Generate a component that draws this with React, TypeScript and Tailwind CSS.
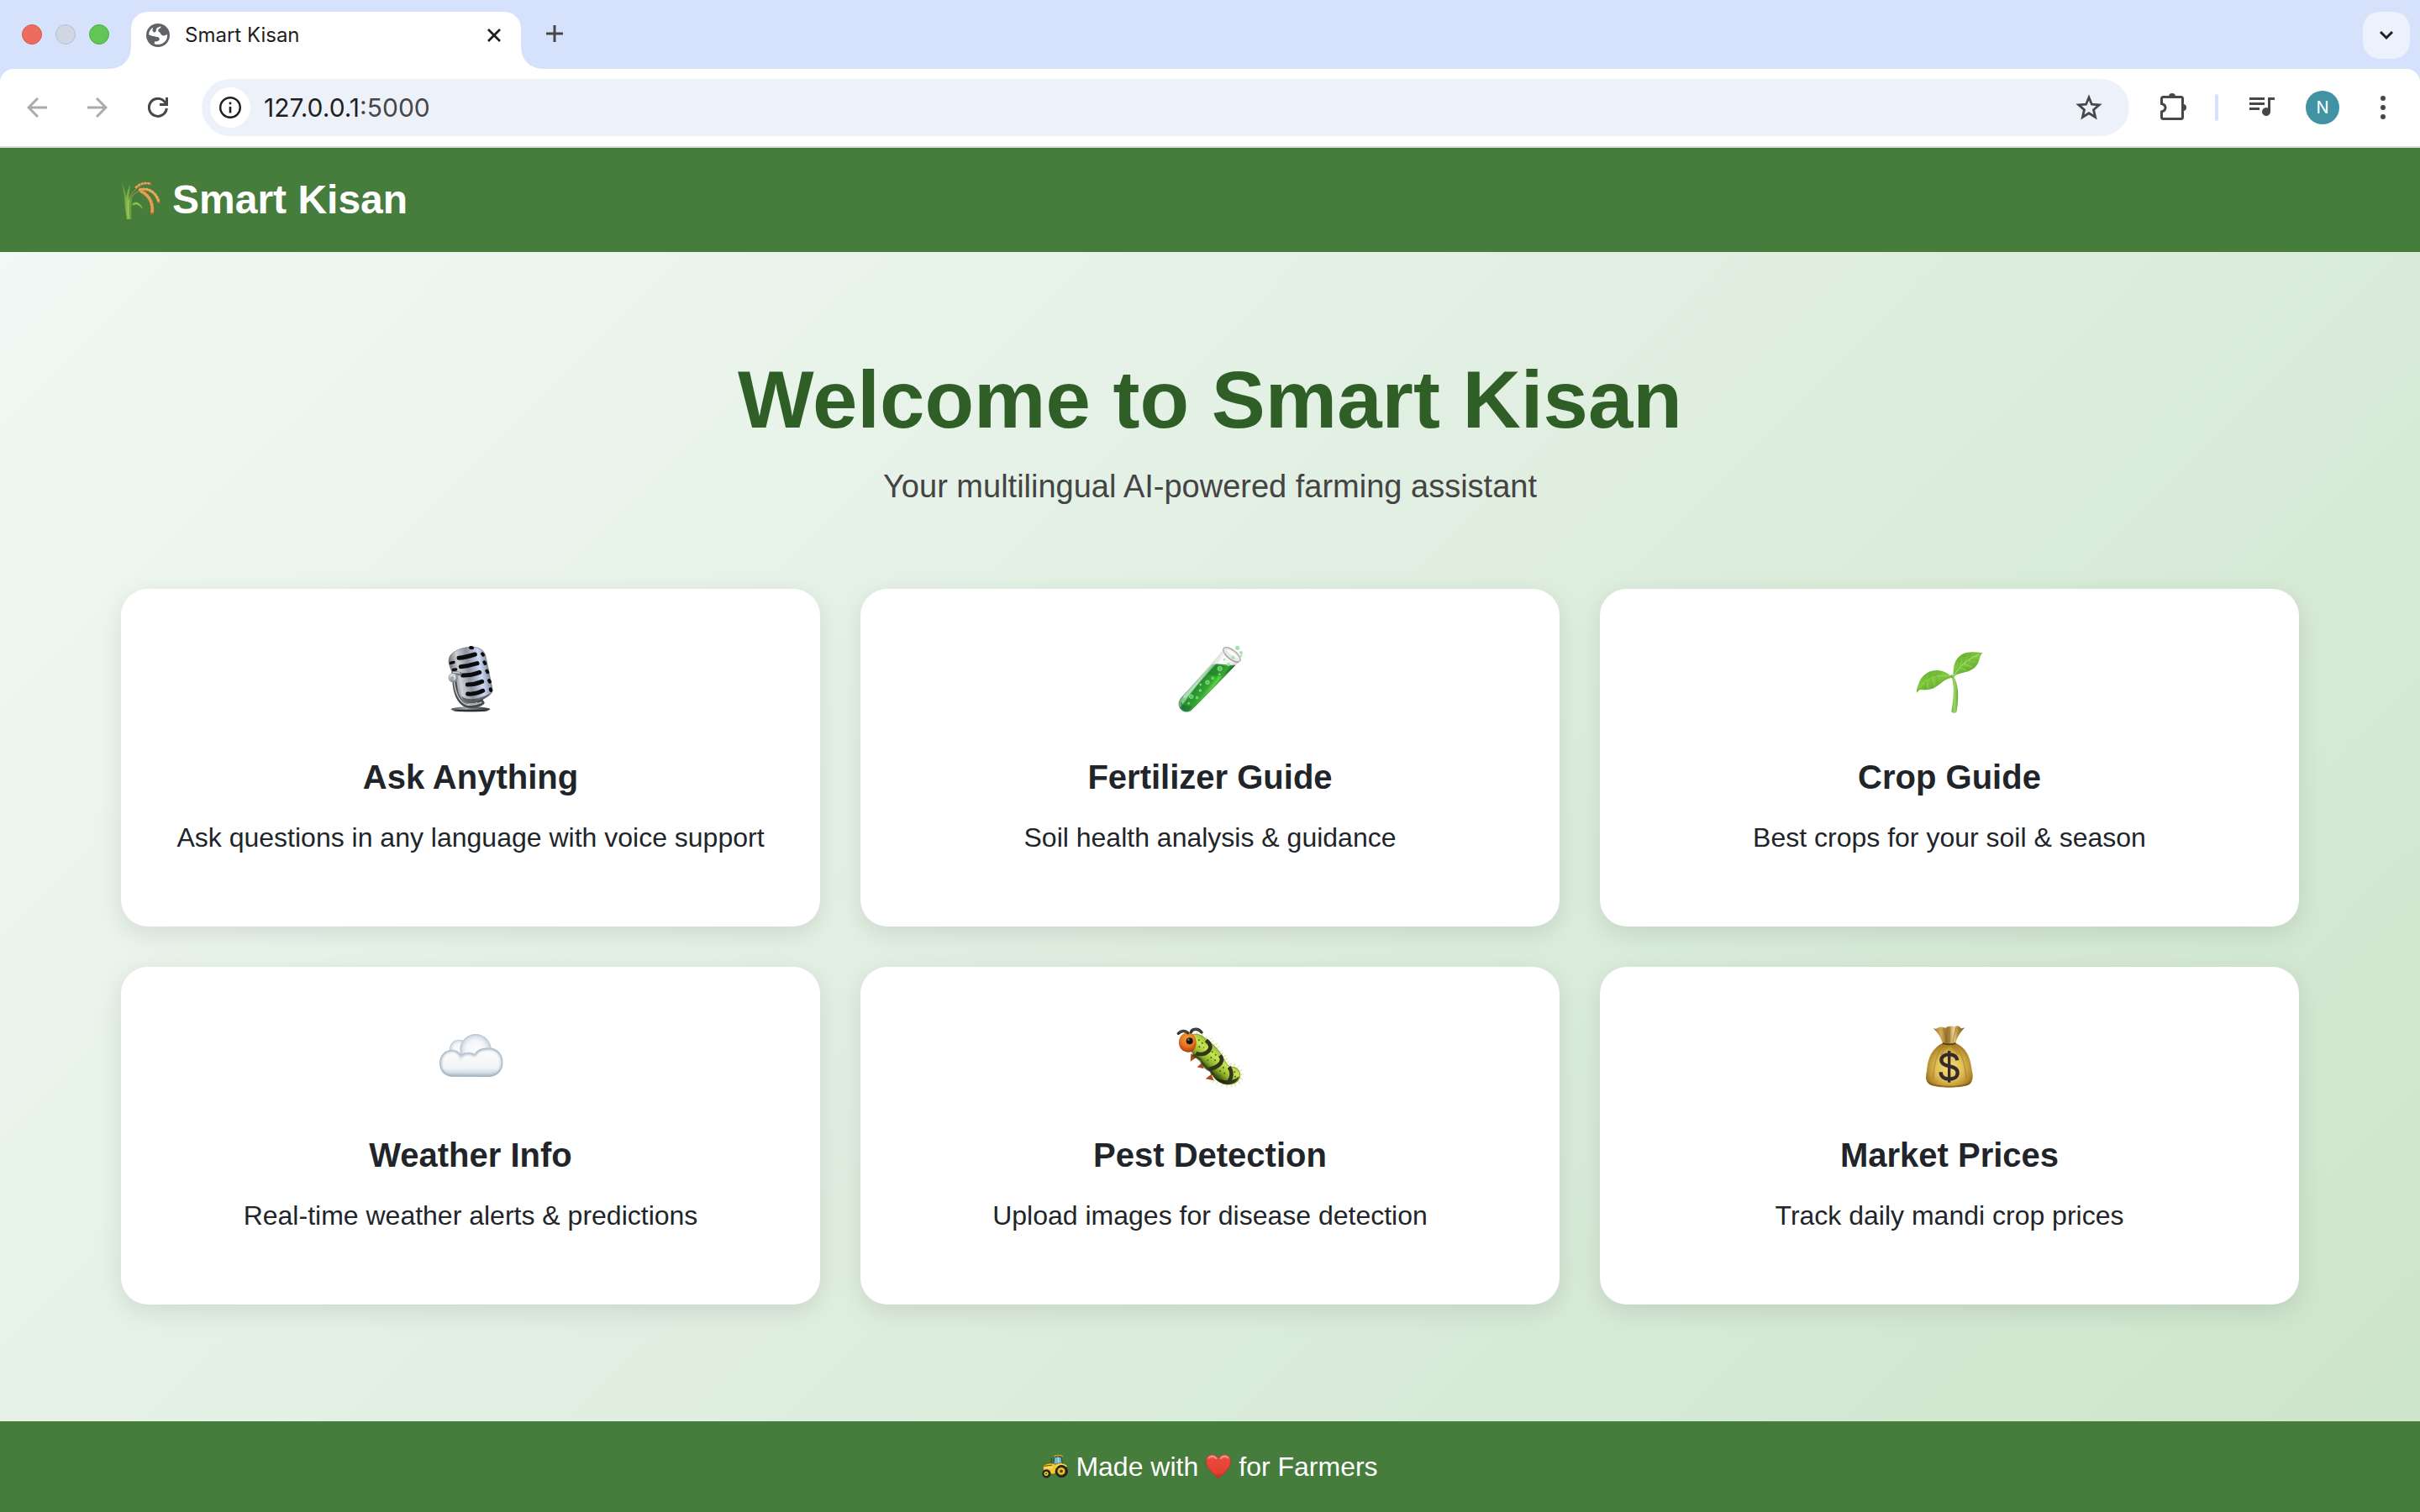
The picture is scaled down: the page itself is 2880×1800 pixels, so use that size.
import type { ReactNode } from "react";

function Rice() {
  return (
    <svg viewBox="42 50 147 147" className="size-12" aria-hidden="true">
      <defs>
        <linearGradient id="stalk" x1="0" x2="1">
          <stop offset="0" stopColor="#55922f" />
          <stop offset=".5" stopColor="#86b84e" />
          <stop offset="1" stopColor="#5c9a33" />
        </linearGradient>
      </defs>
      <g fill="none" strokeLinecap="round">
        <path d="M66 150C70 112 86 86 112 74" stroke="#b08f45" strokeWidth="3" />
        <path d="M68 150C72 118 86 98 112 90" stroke="#b59c4c" strokeWidth="3" />
        <path d="M84 138C96 128 110 132 120 155C110 142 98 134 86 142Z" fill="#8cc63f" stroke="#8cc63f" strokeWidth="2" />
      </g>
      <path d="M45 59C52 74 58 92 61 116C64 98 68 80 76 69C74 88 70 104 71 122C80 108 84 112 82 124C79 140 80 170 80 194H63C60 170 54 140 55 118C52 92 48 78 45 59Z" fill="url(#stalk)" />
      <path d="M71 124C67 140 67 166 71 192" stroke="#a9d36b" strokeWidth="3" fill="none" />
      <g fill="none" strokeLinecap="round">
        <path d="M96 78C110 66 128 58 150 66" stroke="#a87434" strokeWidth="8" />
        <path d="M97 77C111 64 130 60 148 64" stroke="#dea75c" strokeWidth="8" strokeDasharray="3 9" />
        <path d="M112 88C140 80 170 96 180 132" stroke="#ab722e" strokeWidth="10" />
        <path d="M111 86C140 78 170 94 180 132" stroke="#e3ab5e" strokeWidth="10" strokeDasharray="3 9" />
        <path d="M118 94C142 106 162 132 155 172" stroke="#a86d2b" strokeWidth="12" />
        <path d="M117 93C140 104 161 132 155 173" stroke="#dda150" strokeWidth="12" strokeDasharray="3 9" />
      </g>
    </svg>
  );
}

function Microphone() {
  return (
    <svg viewBox="60 75 240 255" className="h-[85px] w-20" aria-hidden="true">
      <defs>
        <linearGradient id="micBody" x1="0" y1=".3" x2="1" y2=".1">
          <stop offset="0" stopColor="#6a6b6f" />
          <stop offset=".2" stopColor="#cfd1d6" />
          <stop offset=".42" stopColor="#8e939e" />
          <stop offset=".68" stopColor="#cddaf5" />
          <stop offset=".84" stopColor="#8f98ab" />
          <stop offset="1" stopColor="#3f4247" />
        </linearGradient>
        <linearGradient id="micBase" x1="0" x2="1">
          <stop offset="0" stopColor="#4a4f50" />
          <stop offset=".4" stopColor="#a5abac" />
          <stop offset=".7" stopColor="#5d6263" />
          <stop offset="1" stopColor="#2e3233" />
        </linearGradient>
      </defs>
      <path d="M200 300L206 278L226 272L220 300Z" fill="#383b3e" />
      <ellipse cx="180" cy="313" rx="70" ry="9" fill="url(#micBase)" />
      <ellipse cx="180" cy="318" rx="62" ry="4" fill="#2d3031" />
      <path d="M103 132C108 108 150 90 186 91C214 92 230 104 234 124L258 240C260 256 246 266 232 272L196 290C170 296 152 286 146 270L106 160C102 150 101 142 103 132Z" fill="url(#micBody)" stroke="#6b6e74" strokeWidth="2" />
      <path d="M148 266C170 284 214 278 252 254C240 274 206 290 186 292C164 292 152 284 148 266Z" fill="#4c4b4e" opacity=".8" />
      <g stroke="#0b0c0e" fill="none" strokeLinecap="round">
        <path d="M138 130C160 128 180 122 196 117" strokeWidth="15" />
        <path d="M145 161C168 159 188 154 204 149" strokeWidth="15" />
        <path d="M152 192C174 192 194 188 212 181" strokeWidth="15" />
        <path d="M169 225C186 225 204 221 221 214" strokeWidth="15" />
        <path d="M170 258C188 260 206 256 224 247" strokeWidth="15" />
        <path d="M180 93L186 94M222 115L225 119M229 145L232 150M238 176L241 181M246 210L249 215M251 241L253 246" strokeWidth="12" />
        <path d="M109 148L120 145M118 172L128 171" strokeWidth="10" />
      </g>
      <g fill="none" strokeLinecap="round">
        <path d="M122 206C124 246 134 284 162 298C184 306 206 300 222 290" stroke="#47494d" strokeWidth="15" />
        <path d="M121 210C124 248 134 280 162 295C184 301 202 296 218 289" stroke="#bdc0c4" strokeWidth="5" />
        <path d="M118 184L142 186" stroke="#75787d" strokeWidth="14" />
        <path d="M118 181L140 183" stroke="#cfd2d7" strokeWidth="4" />
      </g>
      <circle cx="118" cy="200" r="17" fill="#8c9095" />
      <circle cx="116" cy="198" r="12" fill="#d7dade" />
      <circle cx="114" cy="203" r="7" fill="#9ba5b1" />
    </svg>
  );
}

function TestTube() {
  return (
    <svg viewBox="60 75 240 255" className="h-[85px] w-20" aria-hidden="true">
      <defs>
        <linearGradient id="liquid" gradientUnits="userSpaceOnUse" x1="120" y1="200" x2="190" y2="252">
          <stop offset="0" stopColor="#5bb56a" />
          <stop offset=".28" stopColor="#8bd190" />
          <stop offset=".34" stopColor="#2b8b33" />
          <stop offset=".7" stopColor="#31a72f" />
          <stop offset=".88" stopColor="#56da3f" />
          <stop offset="1" stopColor="#1e7f28" />
        </linearGradient>
        <linearGradient id="glass" gradientUnits="userSpaceOnUse" x1="205" y1="120" x2="275" y2="165">
          <stop offset="0" stopColor="#d5dad8" />
          <stop offset=".3" stopColor="#ffffff" />
          <stop offset=".7" stopColor="#ececec" />
          <stop offset="1" stopColor="#c2c8c5" />
        </linearGradient>
      </defs>
      <path d="M228 103L78 272C62 292 70 316 88 321C100 325 110 320 118 311L280 146Z" fill="url(#glass)" stroke="#c9cfcc" strokeWidth="2" />
      <path d="M188 154C212 148 244 160 270 156L118 311C106 324 88 324 78 314C66 302 67 286 78 272Z" fill="url(#liquid)" stroke="#35694a" strokeWidth="2" />
      <path d="M190 160C204 154 240 162 264 158L222 196C200 194 180 190 166 186Z" fill="#1f7d27" opacity=".55" />
      <path d="M76 284C84 300 100 306 116 300L108 314C96 324 76 318 74 300Z" fill="#146b3b" opacity=".55" />
      <path d="M216 126L90 268" stroke="#d6f3de" strokeWidth="11" strokeLinecap="round" opacity=".55" />
      <ellipse cx="258" cy="118" rx="37" ry="16" transform="rotate(38 258 118)" fill="#e9e9e9" stroke="#adadad" strokeWidth="4" />
      <ellipse cx="260" cy="115" rx="28" ry="8" transform="rotate(38 260 115)" fill="#fafafa" stroke="#d8d8d8" strokeWidth="2" />
      <path d="M232 116C244 132 262 144 282 146" stroke="#8c8c8c" strokeWidth="2" fill="none" />
      <g fill="#59c65c" stroke="#a7eba4" strokeWidth="2">
        <circle cx="215" cy="168" r="8" /><circle cx="171" cy="217" r="7" />
        <circle cx="190" cy="202" r="4" /><circle cx="145" cy="246" r="4" />
        <circle cx="113" cy="268" r="7" /><circle cx="134" cy="272" r="4" />
        <circle cx="146" cy="225" r="3" /><circle cx="214" cy="188" r="3" />
        <circle cx="104" cy="292" r="3" />
      </g>
      <g fill="#9be3a0" opacity=".9">
        <circle cx="278" cy="94" r="8" /><circle cx="291" cy="111" r="6" /><circle cx="291" cy="122" r="4" />
        <circle cx="262" cy="128" r="6" /><circle cx="246" cy="153" r="6" /><circle cx="231" cy="136" r="4" />
      </g>
    </svg>
  );
}

function Seedling() {
  return (
    <svg viewBox="60 75 240 255" className="h-[85px] w-20" aria-hidden="true">
      <defs>
        <linearGradient id="leaf" x1="0" y1="0" x2=".6" y2="1">
          <stop offset="0" stopColor="#5fa829" />
          <stop offset=".5" stopColor="#80c841" />
          <stop offset="1" stopColor="#55a024" />
        </linearGradient>
        <linearGradient id="stem" x1="0" x2="1">
          <stop offset="0" stopColor="#5a9f2c" />
          <stop offset=".55" stopColor="#9bd765" />
          <stop offset="1" stopColor="#62a834" />
        </linearGradient>
      </defs>
      <path d="M182 192L190 190L196 196C210 222 216 262 206 320C205 328 188 328 187 320C194 280 198 238 190 204Z" fill="url(#stem)" />
      <path d="M190 200C172 202 156 214 142 226C122 244 96 246 76 243C70 246 66 250 63 255C62 246 64 238 68 228C78 192 104 172 140 174C162 176 180 188 190 200Z" fill="url(#leaf)" />
      <path d="M194 198C192 162 198 132 226 116C246 106 272 108 299 112C290 118 290 126 286 138C278 168 252 178 230 182C214 186 204 188 194 198Z" fill="url(#leaf)" />
      <g fill="none" strokeLinecap="round">
        <path d="M72 238C92 208 124 188 180 194" stroke="#a4da6c" strokeWidth="2" />
        <path d="M197 192C214 162 240 136 284 118" stroke="#b6e389" strokeWidth="3" />
        <path d="M96 214L92 238M112 202L116 236M132 195L138 222M104 207L112 188M124 197L140 182M212 168L216 136M228 152L234 120M244 141L254 118M222 160L248 170M240 145L268 154M256 134L278 138" stroke="#478f1d" strokeWidth="2" opacity=".45" />
        <path d="M100 220L104 238M122 205L128 228M220 164L238 174M232 152L260 162" stroke="#a9e062" strokeWidth="4" opacity=".45" />
      </g>
    </svg>
  );
}

const cloudFront =
  "M114 248C88 248 69 228 69 200C69 172 88 152 114 152C128 152 138 158 146 170C156 160 184 158 194 168C202 152 222 145 244 145C276 145 296 168 296 198C296 228 274 249 244 249Z";

function Cloud() {
  return (
    <svg viewBox="60 48 240 255" className="h-[85px] w-20" aria-hidden="true">
      <defs>
        <radialGradient id="puff" cx=".5" cy=".5" r=".5">
          <stop offset="0" stopColor="#fbfcfd" />
          <stop offset=".6" stopColor="#f3f6f8" />
          <stop offset=".85" stopColor="#dae2e9" />
          <stop offset="1" stopColor="#b4c1cd" />
        </radialGradient>
        <linearGradient id="cloudFloor" x1="0" y1="0" x2="0" y2="1">
          <stop offset="0" stopColor="#fcfdfd" />
          <stop offset=".7" stopColor="#f1f4f6" />
          <stop offset="1" stopColor="#bcc7d1" />
        </linearGradient>
        <clipPath id="cloudClip"><path d={cloudFront} /></clipPath>
        <filter id="cloudSoft"><feGaussianBlur stdDeviation="5" /></filter>
      </defs>
      <circle cx="139" cy="150" r="34" fill="url(#puff)" />
      <circle cx="198" cy="152" r="56" fill="url(#puff)" />
      <g clipPath="url(#cloudClip)">
        <path d={cloudFront} fill="url(#cloudFloor)" />
        <path d={cloudFront} fill="none" stroke="#9aabbb" strokeWidth="11" filter="url(#cloudSoft)" />
        <path d="M142 190C146 166 168 160 196 168" fill="none" stroke="#c9d3dc" strokeWidth="5" filter="url(#cloudSoft)" />
      </g>
    </svg>
  );
}

function Caterpillar() {
  return (
    <svg viewBox="60 48 240 255" className="h-[85px] w-20" aria-hidden="true">
      <defs>
        <linearGradient id="bug" gradientUnits="userSpaceOnUse" x1="215" y1="150" x2="160" y2="215">
          <stop offset="0" stopColor="#93b72e" />
          <stop offset=".35" stopColor="#c9e752" />
          <stop offset=".7" stopColor="#8fb42b" />
          <stop offset="1" stopColor="#34430f" />
        </linearGradient>
        <radialGradient id="bugHead" cx=".5" cy=".3" r=".7">
          <stop offset="0" stopColor="#f5a034" />
          <stop offset=".6" stopColor="#e67322" />
          <stop offset="1" stopColor="#a93d13" />
        </radialGradient>
      </defs>
      <g fill="#ad4a1c">
        <path d="M112 166L110 194L134 178Z" /><path d="M150 200L134 214L158 220Z" /><path d="M184 240L164 256L194 262Z" />
      </g>
      <g stroke="#b3d64b" strokeWidth="2" strokeLinecap="round">
        <path d="M132 100L134 90M150 104L154 94M162 116L170 104M172 122L188 110M180 128L194 118M190 138L206 130M198 150L214 140M206 160L222 156M214 170L228 164M222 180L238 172M228 190L242 184M234 202L246 194M242 212L252 204M254 214L256 200M264 214L270 202M274 220L284 210M282 230L294 224M286 240L298 240M284 250L296 258M278 262L288 274M266 270L272 284M254 270L258 286M240 270L240 286M228 268L222 282M212 264L202 274M202 256L190 270" />
      </g>
      <path d="M118 98C136 92 158 104 168 116C196 134 220 164 232 190C240 206 246 214 260 214C278 214 288 230 287 246C286 264 268 276 244 276C214 276 190 252 182 230C166 220 150 206 148 190C132 182 116 168 112 152Z" fill="url(#bug)" stroke="#59711d" strokeWidth="2" />
      <path d="M284 246C282 266 262 276 242 275C222 272 206 262 196 252C224 262 262 270 284 246Z" fill="#202808" opacity=".85" />
      <path d="M118 170C134 178 148 186 152 200C160 214 170 222 182 226L190 242" stroke="#26300b" strokeWidth="10" fill="none" opacity=".6" />
      <g fill="none" stroke="#33341c" strokeWidth="14">
        <path d="M166 118C178 128 186 142 178 152C168 168 144 172 130 164" />
        <path d="M216 172C226 186 222 198 212 206C200 218 188 218 176 222" />
        <path d="M248 214C260 230 260 252 242 272" />
      </g>
      <g fill="#49611a">
        <circle cx="140" cy="118" r="3" /><circle cx="152" cy="128" r="3" /><circle cx="142" cy="142" r="3" /><circle cx="158" cy="144" r="2" />
        <circle cx="188" cy="160" r="3" /><circle cx="200" cy="170" r="3" /><circle cx="184" cy="180" r="3" /><circle cx="198" cy="190" r="3" /><circle cx="172" cy="190" r="3" />
        <circle cx="228" cy="216" r="3" /><circle cx="216" cy="228" r="3" /><circle cx="232" cy="236" r="3" /><circle cx="214" cy="246" r="3" /><circle cx="268" cy="232" r="3" /><circle cx="270" cy="248" r="3" />
      </g>
      <path d="M106 92C124 94 132 110 131 130C129 150 118 162 102 161C82 160 68 146 69 124C70 104 84 90 106 92Z" fill="url(#bugHead)" />
      <circle cx="107" cy="121" r="12" fill="#161311" />
      <circle cx="103" cy="116" r="4" fill="#6c6a68" />
      <path d="M67 94C76 84 92 82 101 92M112 90C116 76 138 74 150 90" stroke="#333333" strokeWidth="10" fill="none" strokeLinecap="round" />
      <path d="M72 90C80 84 90 84 98 90M120 82C128 76 138 78 146 86" stroke="#6b6b6b" strokeWidth="2" fill="none" strokeLinecap="round" />
    </svg>
  );
}

function MoneyBag() {
  return (
    <svg viewBox="60 48 240 255" className="h-[85px] w-20" aria-hidden="true">
      <defs>
        <radialGradient id="sack" cx=".5" cy=".55" r=".6">
          <stop offset="0" stopColor="#f4dd7c" />
          <stop offset=".5" stopColor="#dfbe55" />
          <stop offset=".85" stopColor="#ae8328" />
          <stop offset="1" stopColor="#7d5713" />
        </radialGradient>
        <linearGradient id="ruffle" x1="0" x2="1">
          <stop offset="0" stopColor="#9a7023" />
          <stop offset=".25" stopColor="#d3ac55" />
          <stop offset=".45" stopColor="#94702c" />
          <stop offset=".65" stopColor="#efd48a" />
          <stop offset=".8" stopColor="#a88033" />
          <stop offset="1" stopColor="#7b5717" />
        </linearGradient>
      </defs>
      <path d="M156 128H202C240 144 256 180 260 226C266 246 264 270 246 278C214 290 146 290 114 278C94 270 94 250 99 228C102 182 118 146 156 128Z" fill="url(#sack)" />
      <path d="M121 74C130 80 136 76 142 72C152 68 158 72 166 74C176 66 190 66 198 70C208 64 216 68 220 74C226 78 230 74 235 73C220 88 206 108 202 130H156C150 108 138 90 121 74Z" fill="url(#ruffle)" />
      <path d="M180 72C182 94 180 110 180 126M158 76C166 96 168 110 168 126M204 74C198 96 194 110 192 126" stroke="#7d5b1d" strokeWidth="3" fill="none" opacity=".6" />
      <path d="M156 129C170 134 188 134 202 129" stroke="#65440f" strokeWidth="6" fill="none" />
      <path d="M160 138C140 158 124 196 122 254M172 138C162 150 154 160 150 172M198 138C220 158 236 200 240 254M188 138C196 146 206 158 210 170" stroke="#956c1e" strokeWidth="5" fill="none" opacity=".4" />
      <path d="M104 266C134 286 226 286 258 266C254 278 240 284 180 286C124 284 108 278 104 266Z" fill="#6e4b12" opacity=".6" />
      <g fill="none" stroke="#352b2b">
        <path d="M208 190C206 174 194 169 179 169C162 169 151 177 151 190C151 204 164 208 180 211C198 215 209 220 209 235C209 249 196 257 180 257C161 257 149 248 149 232" strokeWidth="13" />
        <path d="M179 156V269" strokeWidth="10" />
      </g>
    </svg>
  );
}

function Tractor() {
  return (
    <svg viewBox="116 150 100 96" className="size-8" aria-hidden="true">
      <path d="M151 166V188" stroke="#3a3b36" strokeWidth="3" />
      <path d="M162 162H188L193 196H158Z" fill="#6fb6cb" stroke="#2d3a37" strokeWidth="3" />
      <path d="M176 162L178 192" stroke="#b8e2ea" strokeWidth="4" />
      <path d="M160 161C166 155 188 154 194 160" stroke="#c69d1b" strokeWidth="5" fill="none" />
      <path d="M120 198C124 188 142 184 158 186L166 190C180 180 200 184 208 200L186 208L160 226H142L120 208Z" fill="#f2c730" stroke="#5f4b0c" strokeWidth="2" />
      <path d="M124 196L154 192" stroke="#5d4b11" strokeWidth="3" />
      <path d="M126 203L156 200" stroke="#fce67b" strokeWidth="4" />
      <circle cx="189" cy="215" r="24" fill="#23241f" />
      <circle cx="188" cy="215" r="14" fill="#f3c72e" stroke="#8a6c0e" strokeWidth="2" />
      <circle cx="188" cy="215" r="6" fill="#514010" />
      <path d="M168 202C176 186 198 186 208 198" stroke="#f8da47" strokeWidth="5" fill="none" />
      <circle cx="133" cy="224" r="16" fill="#252620" />
      <circle cx="132" cy="224" r="8" fill="#f1c62f" />
      <circle cx="132" cy="224" r="3" fill="#50400f" />
    </svg>
  );
}

function Heart() {
  return (
    <svg viewBox="704 149 98 96" className="size-8" aria-hidden="true">
      <defs>
        <linearGradient id="heart" x1="0" y1="0" x2="0" y2="1">
          <stop offset="0" stopColor="#e8796c" />
          <stop offset=".2" stopColor="#e8493c" />
          <stop offset=".75" stopColor="#e5402f" />
          <stop offset="1" stopColor="#b62b1e" />
        </linearGradient>
      </defs>
      <path d="M753 167C762 150 788 148 797 168C803 196 778 218 753 240C728 218 702 196 709 168C718 148 744 150 753 167Z" fill="url(#heart)" stroke="#bb2f23" strokeWidth="2" />
      <path d="M717 166C724 157 738 157 746 168M761 168C768 157 782 157 789 166" stroke="#f6b3aa" strokeWidth="4" fill="none" strokeLinecap="round" opacity=".7" />
    </svg>
  );
}

function Globe() {
  return (
    <svg viewBox="0 0 28 28" className="size-7" aria-hidden="true">
      <circle cx="14" cy="14" r="14" fill="#5f6368" />
      <path d="M17.500 3.300C17.800 6.500 14.600 5.600 14.200 8.200C14 10 16.500 9.800 17 11.800C17.600 14.200 21 15.800 25 12.800C26 19.500 20.500 25.800 12.500 25C11 24.800 9.800 24.400 9.500 24L10.300 21.300C13.500 21.800 16.400 20.600 15.600 17.600C14.800 15 10 16.400 3 13.200C3.200 9.600 5 6.400 8.200 4.500C7 8.400 7.500 10.200 10 10.400C12.200 10.400 11.400 7.400 12.600 5.600C13.600 4.200 15.800 4 17.500 3.300Z" fill="#ffffff" />
    </svg>
  );
}

function IconButton({ label, children }: { label: string; children: ReactNode }) {
  return (
    <button type="button" aria-label={label} className="flex size-10 items-center justify-center">
      {children}
    </button>
  );
}

function BrowserChrome() {
  return (
    <div className="bg-[#d6e1fb] font-[Inter,sans-serif]">
      <div className="flex h-[82px] items-end">
        <div className="flex h-full items-center gap-4 pl-[26px] pr-[2px]">
          <button type="button" aria-label="Close window" className="size-6 rounded-full border border-[#d8584c] bg-[#ed6b5f]" />
          <button type="button" aria-label="Minimize window" className="size-6 rounded-full border border-[#b9bfcd] bg-[#d0d6e3]" />
          <button type="button" aria-label="Zoom window" className="size-6 rounded-full border border-[#52ab42] bg-[#62c655]" />
        </div>
        <div className="size-6 bg-[radial-gradient(circle_at_top_left,transparent_23px,white_24px)]" />
        <div className="flex h-[68px] w-[464px] items-center rounded-t-[20px] bg-white px-[18px] pb-[12px]">
          <Globe />
          <span className="ml-[18px] flex-1 text-[24px] leading-8 text-[#1f1f1f]">Smart Kisan</span>
          <button type="button" aria-label="Close tab" className="flex size-7 items-center justify-center">
            <svg viewBox="0 0 28 28" className="size-7" stroke="#1f1f1f" strokeWidth="2.800">
              <path d="M7 7L21 21M21 7L7 21" />
            </svg>
          </button>
        </div>
        <div className="size-6 bg-[radial-gradient(circle_at_top_right,transparent_23px,white_24px)]" />
        <button type="button" aria-label="New tab" className="mb-7 ml-0.5 flex size-7 items-center justify-center">
          <svg viewBox="0 0 28 28" className="size-7" stroke="#474747" strokeWidth="3">
            <path d="M14 4V24M4 14H24" />
          </svg>
        </button>
        <button type="button" aria-label="Search tabs" className="mb-3 ml-auto mr-3 flex size-14 items-center justify-center rounded-[20px] bg-[#ebf2fd]">
          <svg viewBox="0 0 24 24" className="size-6" fill="none" stroke="#1f1f1f" strokeWidth="3">
            <path d="M5 8L12 15L19 8" />
          </svg>
        </button>
      </div>
      <div className="flex h-[94px] items-center rounded-t-[16px] border-b-2 border-[#dddddd] bg-white px-6">
        <nav className="flex gap-8" aria-label="Browser">
          <IconButton label="Back">
            <svg viewBox="0 0 24 24" className="size-6" fill="none" stroke="#ababab" strokeWidth="3">
              <path d="M24 12H2M13 1L2 12L13 23" />
            </svg>
          </IconButton>
          <IconButton label="Forward">
            <svg viewBox="0 0 24 24" className="size-6" fill="none" stroke="#ababab" strokeWidth="3">
              <path d="M0 12H22M11 1L22 12L11 23" />
            </svg>
          </IconButton>
          <IconButton label="Reload">
            <svg viewBox="0 0 24 24" className="size-6" fill="none" stroke="#474747" strokeWidth="3">
              <path d="M22.300 13A10.500 10.500 0 1 1 19.800 5L22 7.500" />
              <path d="M22.500 0V8.500H14" />
            </svg>
          </IconButton>
        </nav>
        <div className="ml-8 flex h-[68px] flex-1 items-center rounded-full bg-[#edf2fa] pl-[10px] pr-7">
          <button type="button" aria-label="View site information" className="flex size-12 items-center justify-center rounded-full bg-white">
            <svg viewBox="0 0 26 26" className="size-[26px]" fill="none" stroke="#1f1f1f">
              <circle cx="13" cy="13" r="11.800" strokeWidth="2.400" />
              <path d="M13 12V19.500M13 6.500V9.200" strokeWidth="2.600" />
            </svg>
          </button>
          <div role="textbox" aria-label="Address" className="ml-4 flex-1 text-[30px] leading-9 text-[#1f1f1f]">
            127.0.0.1<span className="text-[#474747]">:5000</span>
          </div>
          <IconButton label="Bookmark this page">
            <svg viewBox="0 0 32 32" className="size-8" fill="none" stroke="#474747" strokeWidth="2.800">
              <path d="M16 4L19.400 12.200L28.200 12.900L21.500 18.700L23.600 27.400L16 22.700L8.400 27.400L10.500 18.700L3.800 12.900L12.600 12.200Z" />
            </svg>
          </IconButton>
        </div>
        <div className="ml-8 flex items-center">
          <IconButton label="Extensions">
            <svg viewBox="0 0 36 36" className="size-9" fill="none" stroke="#474747" strokeWidth="3">
              <path d="M4.500 13.500V7.500Q4.500 5.500 6.500 5.500H27.500Q29.500 5.500 29.500 7.500V29.500Q29.500 31.500 27.500 31.500H6.500Q4.500 31.500 4.500 29.500V23C10.500 21.500 10.500 15 4.500 13.500Z" />
              <path d="M13 5A4 4 0 0 1 21 5ZM30 14A4 4 0 0 1 30 22Z" fill="#474747" stroke="none" />
            </svg>
          </IconButton>
          <div className="ml-[30px] h-8 w-1 rounded-full bg-[#d6e1fb]" />
          <div className="ml-8 flex items-center gap-8">
            <IconButton label="Media controls">
              <svg viewBox="0 0 30 24" className="h-6 w-[30px]" fill="#474747">
                <path d="M0 0H18V3H0ZM0 6H18V9H0ZM0 12H12V15H0ZM22 0H30V3H25V17A5 5 0 1 1 22 12.500Z" />
              </svg>
            </IconButton>
            <button type="button" aria-label="Profile" className="flex size-10 items-center justify-center rounded-full bg-[#4193a3] text-[20px] leading-6 text-white">
              N
            </button>
            <IconButton label="Menu">
              <svg viewBox="0 0 8 28" className="h-7 w-2" fill="#474747">
                <circle cx="4" cy="3" r="3" /><circle cx="4" cy="14" r="3" /><circle cx="4" cy="25" r="3" />
              </svg>
            </IconButton>
          </div>
        </div>
      </div>
    </div>
  );
}

const features = [
  { title: "Ask Anything", text: "Ask questions in any language with voice support", Icon: Microphone },
  { title: "Fertilizer Guide", text: "Soil health analysis & guidance", Icon: TestTube },
  { title: "Crop Guide", text: "Best crops for your soil & season", Icon: Seedling },
  { title: "Weather Info", text: "Real-time weather alerts & predictions", Icon: Cloud },
  { title: "Pest Detection", text: "Upload images for disease detection", Icon: Caterpillar },
  { title: "Market Prices", text: "Track daily mandi crop prices", Icon: MoneyBag },
];

export default function App() {
  return (
    <div className="flex min-h-screen flex-col font-['Liberation_Sans',Arial,sans-serif]">
      <BrowserChrome />
      <header className="bg-[#467c3c] px-36 py-[26px]">
        <a href="#home" className="flex w-fit items-center gap-[13px] text-[48px] font-bold leading-[72px] text-white">
          <Rice />
          Smart Kisan
        </a>
      </header>
      <main className="flex-1 bg-[linear-gradient(135deg,#f2f8f5,#cde5cb)] px-36 pt-[118px]">
        <h1 className="text-center text-[96px] font-bold leading-[116px] text-[#2f5f27]">Welcome to Smart Kisan</h1>
        <p className="mt-4 text-center text-[38px] leading-[58px] text-[#444444]">Your multilingual AI-powered farming assistant</p>
        <div className="mt-[93px] grid grid-cols-3 gap-12 pb-20">
          {features.map(({ title, text, Icon }) => (
            <a
              key={title}
              href="#feature"
              className="flex flex-col items-center rounded-[32px] bg-white px-12 pb-[82px] pt-16 text-center text-[#212529] shadow-[0_8px_30px_rgba(0,0,0,0.1)]"
            >
              <Icon />
              <h2 className="mt-[51px] text-[40px] font-bold leading-[48px]">{title}</h2>
              <p className="mt-6 text-[32px] leading-[48px]">{text}</p>
            </a>
          ))}
        </div>
      </main>
      <footer className="flex items-center justify-center gap-2 bg-[#467c3c] py-[30px] text-[32px] leading-[48px] text-white">
        <Tractor />
        <span>Made with</span>
        <Heart />
        <span>for Farmers</span>
      </footer>
    </div>
  );
}
